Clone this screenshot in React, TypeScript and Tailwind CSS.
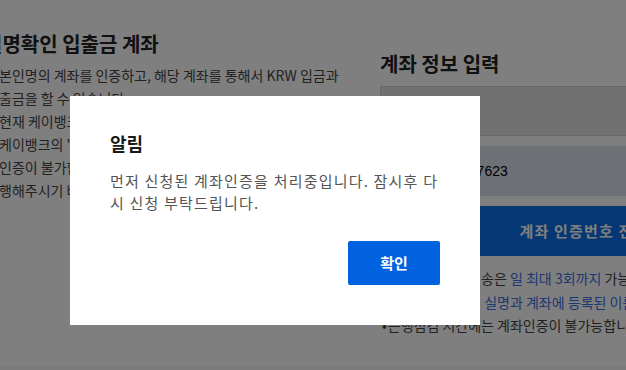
export default function App() {
  return (
    <div
      className="relative w-[626px] h-[370px] overflow-hidden bg-white"
      style={{ fontFamily: '"Noto Sans CJK KR", "Noto Sans", sans-serif' }}
    >
      {/* page behind the dialog */}
      <div className="flex h-[366px]">
        <div className="ml-[-16px] w-[373px] shrink-0 pt-[30px]">
          <h2 className="text-[20px] leading-[28px] font-bold text-[#222]">실명확인 입출금 계좌</h2>
          <div className="mt-[6px] w-[360px] pl-[15px] text-[14px] leading-[23px] text-[#444]">
            <p>본인명의 계좌를 인증하고, 해당 계좌를 통해서 KRW 입금과 출금을 할 수 있습니다.</p>
            <p className="whitespace-nowrap">
              현재 케이뱅크 계좌만 연결이 가능하며, 타 은행 계좌는
              <br />
              케이뱅크의 '자금세탁방지' 정책에 따라 계좌
              <br />
              인증이 불가합니다. 케이뱅크 계좌 개설 후 인증을 진
              <br />
              행해주시기 바랍니다.
            </p>
          </div>
        </div>

        <div className="ml-[23px] w-[408px] shrink-0 pt-[50px]">
          <h2 className="text-[20px] leading-[28px] font-bold text-[#222]">계좌 정보 입력</h2>
          <div className="mt-[8px] h-[50px] border border-[#cfcfcf] bg-[#e2e2e2]" />
          <div className="mt-[10px] flex h-[50px] items-center bg-[#dde2ec] pl-[25px]">
            <span className="text-[14px] text-black" style={{ fontFamily: '"Liberation Sans", sans-serif' }}>
              3333-012-57623
            </span>
          </div>
          <button className="mt-[10px] flex h-[50px] w-full items-center justify-center bg-[#0a6fe8] text-[15px] font-bold tracking-[1.2px] text-white">
            계좌 인증번호 전송
          </button>
          <ul className="mt-[11px] pl-[2px] text-[14px] leading-[23.5px] text-[#444]">
            <li className="flex gap-[1px] whitespace-nowrap">
              <span>•</span>
              <span>
                계좌인증번호 전송은 <span className="text-[#3b6fe0]">일 최대 3회까지</span> 가능합니다.
              </span>
            </li>
            <li className="flex gap-[1px] whitespace-nowrap">
              <span>•</span>
              <span className="text-[#3b6fe0]">케이뱅크 본인의 실명과 계좌에 등록된 이름이 같아야 합니다.</span>
            </li>
            <li className="flex gap-[1px] whitespace-nowrap">
              <span>•</span>
              <span>은행점검 시간에는 계좌인증이 불가능합니다.</span>
            </li>
          </ul>
        </div>
      </div>
      <div className="h-[4px] bg-[#f4f4f4]" />

      {/* dim */}
      <div className="absolute inset-0 bg-black/50" />

      {/* alert dialog */}
      <div className="absolute left-[70px] top-[96px] flex h-[229px] w-[410px] flex-col bg-white px-[40px] pt-[34px]">
        <h3 className="text-[18px] leading-[26px] font-bold text-[#1a1a1a]">알림</h3>
        <p className="mt-[14px] text-[15px] leading-[22px] tracking-[1.2px] text-[#555]">
          먼저 신청된 계좌인증을 처리중입니다. 잠시후 다시 신청 부탁드립니다.
        </p>
        <div className="mt-[27px] flex justify-end">
          <button className="h-[44px] w-[92px] rounded-[2px] bg-[#0062df] text-[15px] font-bold text-white">
            확인
          </button>
        </div>
      </div>
    </div>
  );
}
